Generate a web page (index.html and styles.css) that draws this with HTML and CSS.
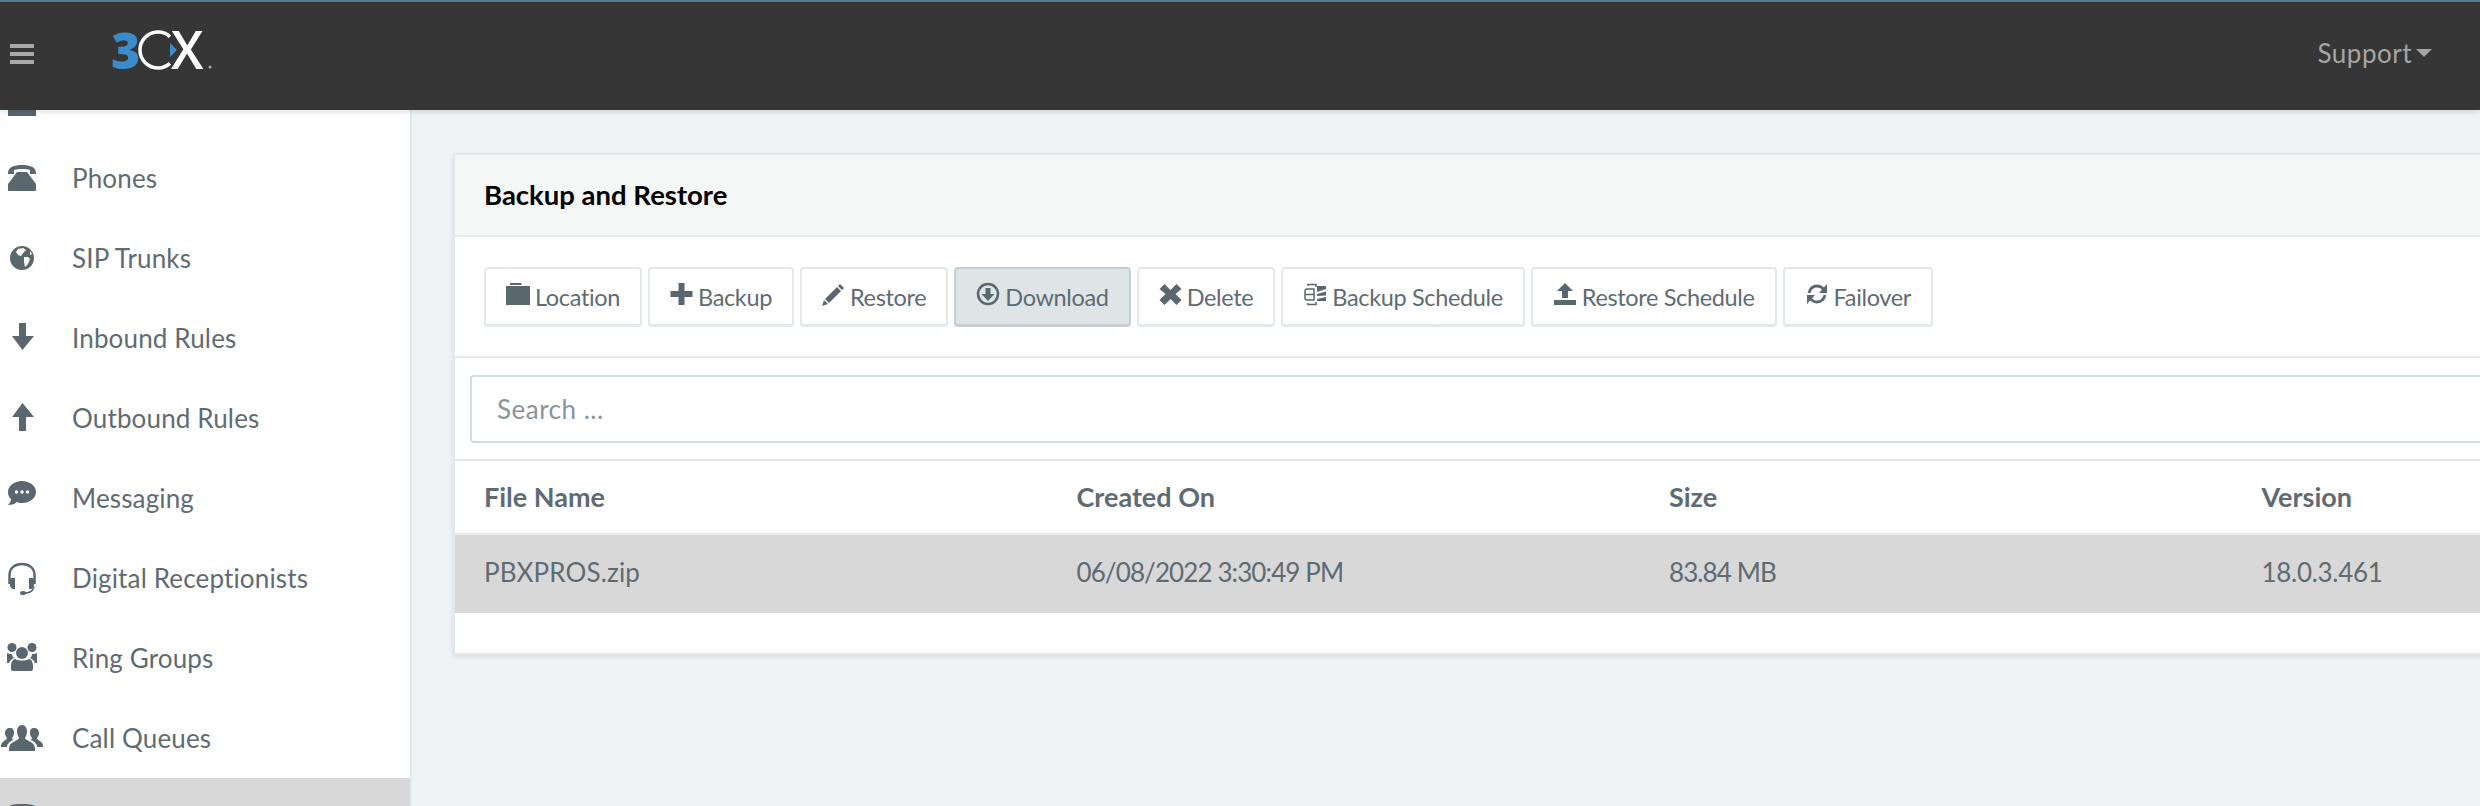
FILE: index.html
```html
<!DOCTYPE html>
<html lang="en">
<head>
    <meta charset="UTF-8">
    <title>3CX - Backup and Restore</title>
    <link rel="stylesheet" href="styles.css">
</head>
<body>
    <header class="topbar">
        <div class="topbar-left">
            <svg class="burger" width="24" height="20" viewBox="0 0 24 20"><path d="M0 0h24v4H0zM0 8h24v4H0zM0 16h24v4H0z"/></svg>
            <svg class="logo" width="110" height="76" viewBox="0 0 110 76">
                <text class="logo-3" x="3" y="56">3</text>
                <path class="logo-ring" d="M62 23.600A18 18 0 1 0 62 50.400"/>
                <text class="logo-x" x="63" y="56">X</text>
                <path class="logo-play" d="M62 30l7 7-7 7z"/>
                <circle class="logo-reg" cx="102" cy="54" r="1.500"/>
            </svg>
        </div>
        <div class="support">Support<span class="caret"></span></div>
    </header>

    <div class="layout">
        <aside class="sidebar">
            <ul class="nav">
                <li class="nav-item">
                    <svg class="nav-icon" viewBox="0 0 44 36"><path d="M8 10h28v26H8z"/></svg>
                    <span>Dashboard</span>
                </li>
                <li class="nav-item">
                    <svg class="nav-icon" viewBox="0 0 44 36"><path d="M8 13C8 7 14 5 22 5s14 2 14 8v1h-6v-4c-2-1-5-1-8-1s-6 0-8 1v4H8zM17 12h10l9 12v6c0 1-1 1-1 1H9s-1 0-1-1v-6z"/></svg>
                    <span>Phones</span>
                </li>
                <li class="nav-item">
                    <svg class="nav-icon" viewBox="0 0 44 36"><circle cx="22" cy="18" r="12"/><path class="cut" d="M18 9l5-1 3 2-3 3-2 3-3-1-2-3zM24 17l4 0 2 2-2 5-3 3-1-5zM30 11l2 3-2 1z"/></svg>
                    <span>SIP Trunks</span>
                </li>
                <li class="nav-item">
                    <svg class="nav-icon" viewBox="0 0 44 36"><path d="M19 3h7v13h8L22.500 30 12 16h7z"/></svg>
                    <span>Inbound Rules</span>
                </li>
                <li class="nav-item">
                    <svg class="nav-icon" viewBox="0 0 44 36"><path d="M22.500 3L34 17h-8v14h-7V17h-7z"/></svg>
                    <span>Outbound Rules</span>
                </li>
                <li class="nav-item">
                    <svg class="nav-icon" viewBox="0 0 44 36"><path d="M22 1c8 0 14 5 14 11s-6 11-14 11c-2 0-3 0-5-1-2 2-5 3-9 3 2-2 3-4 3-6-2-2-3-4-3-7C8 6 14 1 22 1z"/><circle class="cut" cx="16.500" cy="12" r="1.700"/><circle class="cut" cx="22" cy="12" r="1.700"/><circle class="cut" cx="27.500" cy="12" r="1.700"/></svg>
                    <span>Messaging</span>
                </li>
                <li class="nav-item">
                    <svg class="nav-icon" viewBox="0 0 44 36"><path class="line" d="M9.500 24v-9C9.500 8 15 4 22 4s12.500 4 12.500 11v9"/><path d="M11 18h4v11h-2c-1 0-2-1-3-3v-6zM29 18h4l1 2v6c-1 2-2 3-3 3h-2z"/><path class="line-thin" d="M34 27c-1 4-4 6-9 6"/><ellipse cx="23" cy="33" rx="3" ry="2"/></svg>
                    <span>Digital Receptionists</span>
                </li>
                <li class="nav-item">
                    <svg class="nav-icon" viewBox="0 0 44 36"><circle cx="22" cy="13" r="6"/><circle cx="12" cy="7.500" r="4.500"/><circle cx="32" cy="7.500" r="4.500"/><path d="M15 19c4 2 10 2 14 0 2 0 4 3 4 7v3c0 1-1 2-2 2H13c-1 0-2-1-2-2v-3c0-4 2-7 4-7z"/><path d="M7 13c2 1 3 1 5 1 0 2 1 3 2 4-3 1-4 3-5 5-2 0-2 0-2-1zM37 13c-2 1-3 1-5 1 0 2-1 3-2 4 3 1 4 3 5 5 2 0 2 0 2-1z"/></svg>
                    <span>Ring Groups</span>
                </li>
                <li class="nav-item">
                    <svg class="nav-icon" viewBox="0 0 44 36"><path d="M22 5c3 0 5 3 5 6 0 3-1 5-2 7 0 2 8 4 9 7 1 2 1 4 1 6H9c0-2 0-4 1-6 1-3 9-5 9-7-1-2-2-4-2-7s2-6 5-6z"/><path d="M10 8c3 0 4 2 4 5 0 2-1 4-2 5l1 2c-2 1-4 2-5 4-1 1-1 2-1 3H1c0-2 0-3 1-4 1-2 5-3 5-5-1-1-2-3-2-5 0-3 2-5 5-5zM34 8c-3 0-4 2-4 5 0 2 1 4 2 5l-1 2c2 1 4 2 5 4 1 1 1 2 1 3h6c0-2 0-3-1-4-1-2-5-3-5-5 1-1 2-3 2-5 0-3-2-5-5-5z"/></svg>
                    <span>Call Queues</span>
                </li>
                <li class="nav-item nav-item-active">
                    <svg class="nav-icon" viewBox="0 0 44 36"><path d="M22 4c8 0 14 1 14 4v20c0 3-6 4-14 4s-14-1-14-4V8c0-3 6-4 14-4z"/></svg>
                    <span>Backup and Restore</span>
                </li>
            </ul>
        </aside>

        <main class="content">
            <section class="card">
                <h2 class="card-title">Backup and Restore</h2>

                <div class="toolbar">
                    <button class="btn">
                        <svg class="btn-icon" width="24" height="24" viewBox="0 0 24 24"><path d="M4 1h11l1 2H4zM0 4h24v19H0z"/></svg>
                        Location
                    </button>
                    <button class="btn">
                        <svg class="btn-icon" width="23" height="24" viewBox="0.500 0 23 24"><path d="M9 1h6v8h8v6h-8v8H9v-8H1V9h8z"/></svg>
                        Backup
                    </button>
                    <button class="btn">
                        <svg class="btn-icon" width="23" height="24" viewBox="1 1 23 24"><path d="M19 3l4 4-2 2-4-4zM16 6l4 4L8 22l-4-4zM3 19l4 4-6 2z"/></svg>
                        Restore
                    </button>
                    <button class="btn btn-active">
                        <svg class="btn-icon" width="24" height="24" viewBox="0 0 24 24"><circle class="ring" cx="12" cy="12" r="10"/><path d="M9.500 6h5v6h4L12 19l-6.500-7h4z"/></svg>
                        Download
                    </button>
                    <button class="btn">
                        <svg class="btn-icon" width="23" height="24" viewBox="0.500 0 23 24"><path d="M6 2l6 6 6-6 5 5-6 5 6 6-5 5-6-6-6 6-5-5 6-6-6-5z"/></svg>
                        Delete
                    </button>
                    <button class="btn">
                        <svg class="btn-icon" width="24" height="24" viewBox="0 0 24 24"><path class="ring-thin" d="M4 7h7v11H4a2 2 0 0 1-2-2V9a2 2 0 0 1 2-2zM2 12.500h9M5 4V2.500h8V5M5 21v1.500h8V20"/><path d="M14 4h9v3l-9 3zM14 12l9-2.500v4L14 14zM14 17l9-2v4h-9z"/></svg>
                        Backup Schedule
                    </button>
                    <button class="btn">
                        <svg class="btn-icon" width="24" height="24" viewBox="0 0 24 24"><path d="M12 1l8 8h-5v7H9V9H4zM1 18h22v5H1z"/></svg>
                        Restore Schedule
                    </button>
                    <button class="btn">
                        <svg class="btn-icon" width="24" height="24" viewBox="0 0 24 24"><path class="ring-bold" d="M4 11c1-4 4-7 8-7 3 0 5 1 7 4M20 13c-1 4-4 7-8 7-3 0-5-1-7-4"/><path d="M22 2v9h-8zM2 22v-9h8z"/></svg>
                        Failover
                    </button>
                </div>

                <div class="search-row">
                    <div class="search-box">Search ...</div>
                </div>

                <div class="table">
                    <div class="table-row table-head">
                        <div>File Name</div>
                        <div>Created On</div>
                        <div>Size</div>
                        <div>Version</div>
                    </div>
                    <div class="table-row table-selected">
                        <div>PBXPROS.zip</div>
                        <div class="num">06/08/2022 3:30:49 PM</div>
                        <div class="num">83.84 MB</div>
                        <div class="num-version">18.0.3.461</div>
                    </div>
                </div>
            </section>
        </main>
    </div>
</body>
</html>
```

FILE: styles.css
```css
html, body {
    margin: 0;
    height: 806px;
    overflow: hidden;
}
body {
    font-family: 'Lato', sans-serif;
    font-size: 26px;
    letter-spacing: 0.15px;
    color: #5f6b73;
    background: #f0f2f4;
}

/* top bar */
.topbar {
    position: relative;
    z-index: 2;
    display: flex;
    justify-content: space-between;
    align-items: center;
    box-sizing: border-box;
    height: 110px;
    padding: 0 48px 4px 0;
    background: #363636;
    border-top: 2px solid #4d7f8a;
    box-shadow: 0 2px 6px rgba(0, 0, 0, 0.12);
}
.topbar-left {
    display: flex;
    align-items: center;
    padding-left: 10px;
}
.burger {
    fill: #a8a8a8;
}
.logo {
    margin: -6px 0 0 74px;
    overflow: visible;
}
.logo-3 {
    font-family: 'Open Sans', sans-serif;
    font-weight: 800;
    font-size: 50px;
    fill: #3b8ccb;
}
.logo-x {
    font-family: 'Open Sans', sans-serif;
    font-weight: 600;
    font-size: 52px;
    fill: #fff;
}
.logo-ring {
    fill: none;
    stroke: #fff;
    stroke-width: 3.500;
}
.logo-play {
    fill: #3b8ccb;
}
.logo-reg {
    fill: #aaa;
}
.support {
    display: flex;
    align-items: center;
    margin-top: -2px;
    letter-spacing: 0.5px;
    color: #a5a5a5;
}
.caret {
    margin-left: 4px;
    border-top: 8px solid #a5a5a5;
    border-left: 8px solid transparent;
    border-right: 8px solid transparent;
}

/* sidebar */
.layout {
    display: flex;
    height: 696px;
}
.sidebar {
    flex: none;
    width: 410px;
    overflow: hidden;
    background: white;
    border-right: 2px solid #e3e8ea;
}
.nav {
    list-style: none;
    margin: -52px 0 0;
    padding: 0;
}
.nav-item {
    display: flex;
    align-items: center;
    gap: 28px;
    height: 80px;
}
.nav-item-active {
    background: #d8d8d8;
}
.nav-icon {
    flex: none;
    width: 44px;
    height: 36px;
    fill: #5a676f;
}
.cut {
    fill: white;
}
.line {
    fill: none;
    stroke: #5a676f;
    stroke-width: 2.500;
}
.line-thin {
    fill: none;
    stroke: #5a676f;
    stroke-width: 1.500;
}

/* card */
.content {
    flex: 1;
    overflow: hidden;
    padding: 43px 0 0 41px;
}
.card {
    width: 2500px;
    background: white;
    border: 2px solid #e3e8ea;
    border-radius: 3px;
    box-shadow: 0 2px 4px rgba(90, 110, 120, 0.15);
}
.card-title {
    box-sizing: border-box;
    height: 82px;
    margin: 0;
    padding-left: 29px;
    font-size: 27.500px;
    font-weight: 700;
    line-height: 80px;
    letter-spacing: 0;
    color: black;
    background: #f5f7f7;
    border-bottom: 2px solid #e8ecee;
}
.toolbar {
    display: flex;
    gap: 6px;
    box-sizing: border-box;
    height: 121px;
    padding: 30px 29px;
    border-bottom: 2px solid #e3e8ea;
}
.btn {
    display: inline-flex;
    align-items: center;
    gap: 5px;
    box-sizing: border-box;
    height: 60px;
    padding: 0 20px;
    font-family: inherit;
    font-size: 23.500px;
    letter-spacing: -0.35px;
    color: #5f6b73;
    background: white;
    border: 2px solid #e3e8ea;
    border-bottom-width: 3px;
    border-radius: 4px;
}
.btn-active {
    background: #dfe4e6;
    border-color: #c5ced2;
}
.btn-icon {
    margin-top: -6px;
    fill: #5a676f;
}
.ring {
    fill: none;
    stroke: #5a676f;
    stroke-width: 2.500;
}
.ring-thin {
    fill: none;
    stroke: #5a676f;
    stroke-width: 1.500;
}
.ring-bold {
    fill: none;
    stroke: #5a676f;
    stroke-width: 2.800;
}

/* search */
.search-row {
    padding: 17px 0 16px 15px;
    border-bottom: 2px solid #e3e8ea;
}
.search-box {
    box-sizing: border-box;
    height: 68px;
    padding-left: 25px;
    line-height: 64px;
    letter-spacing: 0.5px;
    color: #8a949b;
    border: 2px solid #d3dcdf;
    border-radius: 4px;
}

/* table */
.table {
    padding-bottom: 40px;
}
.table-row {
    display: grid;
    grid-template-columns: repeat(4, 592.500px);
    padding-left: 29px;
    align-items: center;
}
.table-head {
    box-sizing: border-box;
    height: 74px;
    padding-bottom: 2px;
    font-size: 27px;
    font-weight: 700;
    letter-spacing: 0;
    border-bottom: 2px solid #e8ecee;
}
.table-selected {
    height: 78px;
    padding-bottom: 5px;
    box-sizing: border-box;
    background: #d8d8d8;
}
.num {
    letter-spacing: -0.900px;
}
.num-version {
    letter-spacing: -0.300px;
}
```
